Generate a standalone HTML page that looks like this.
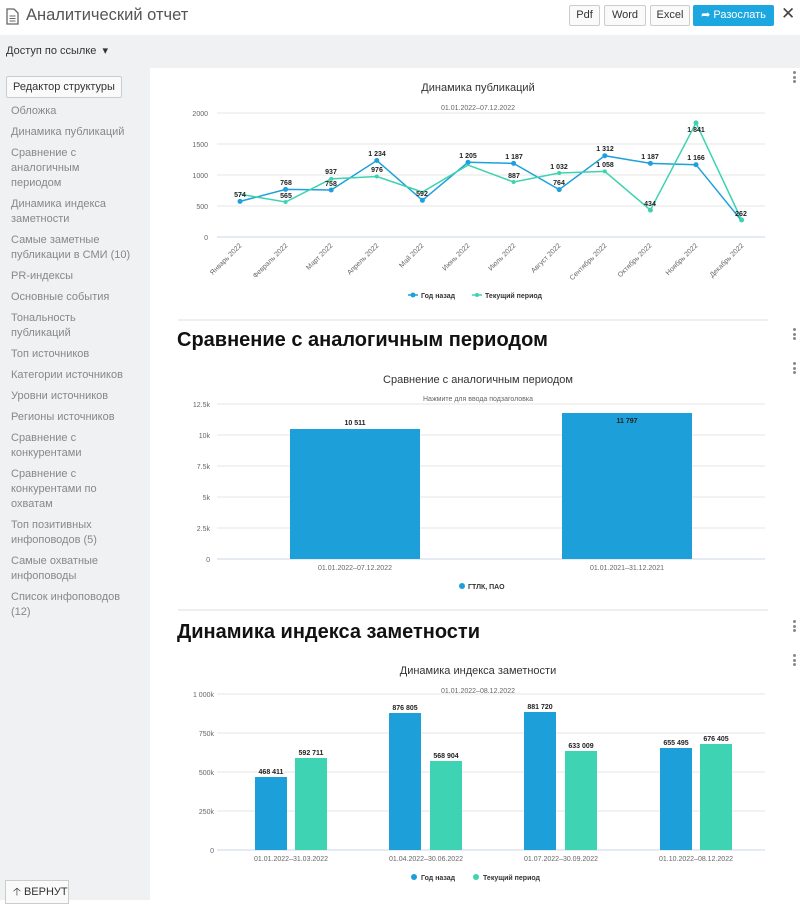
<!DOCTYPE html>
<html><head><meta charset="utf-8"><style>
*{margin:0;padding:0;box-sizing:border-box}
body{width:800px;height:900px;overflow:hidden;font-family:"Liberation Sans","DejaVu Sans",sans-serif;background:#fff;position:relative}
.top{position:absolute;left:0;top:0;width:800px;height:35px;background:#fff}
.title{position:absolute;left:26px;top:6px;font-size:16.5px;color:#555}
.btn{position:absolute;top:5px;height:21px;border:1px solid #ccc;border-radius:2px;background:#fafafa;font-size:11px;color:#333;text-align:center;line-height:19px}
.bar2{position:absolute;left:0;top:35px;width:800px;height:33px;background:#f0f1f3}
.side{position:absolute;left:0;top:68px;width:150px;height:832px;background:#f0f1f3}
.side .ed{position:absolute;left:6px;top:8px;width:116px;height:22px;border:1px solid #ccc;background:#fafafa;border-radius:2px;font-size:11px;color:#333;text-align:center;line-height:20px}
.nav{position:absolute;left:11px;top:36px;width:121px;font-size:11px;color:#888;line-height:15px}
.nav div{margin-bottom:6px}
.h{position:absolute;left:177px;font-size:20px;font-weight:bold;color:#111}
.dots{position:absolute;left:793px;width:3px;font-size:0}
.dots i{display:block;width:3px;height:3px;background:#888;border-radius:50%;margin-bottom:1.5px}
svg{position:absolute;left:0;top:0}
</style></head><body>
<div class="top">
<svg width="20" height="20" style="left:5px;top:8px"><path d="M2 1h7l4 4v11H2z" fill="none" stroke="#666" stroke-width="1.3"/><path d="M4.5 8h6M4.5 10.5h6M4.5 13h6" stroke="#666"/></svg>
<div class="title">Аналитический отчет</div>
<div class="btn" style="left:569px;width:31px">Pdf</div>
<div class="btn" style="left:604px;width:42px">Word</div>
<div class="btn" style="left:650px;width:40px">Excel</div>
<div class="btn" style="left:693px;width:81px;background:#1da7e0;border-color:#1da7e0;color:#fff">➦ Разослать</div>
<div style="position:absolute;left:781px;top:4px;font-size:17px;color:#444">✕</div>
</div>
<div class="bar2"><div style="position:absolute;left:6px;top:9px;font-size:11px;color:#333">Доступ по ссылке &nbsp;▾</div></div>
<div class="side">
<div class="ed">Редактор структуры</div>
<div class="nav">
<div>Обложка</div><div>Динамика публикаций</div><div>Сравнение с аналогичным периодом</div><div>Динамика индекса заметности</div><div>Самые заметные публикации в СМИ (10)</div><div>PR-индексы</div><div>Основные события</div><div>Тональность публикаций</div><div>Топ источников</div><div>Категории источников</div><div>Уровни источников</div><div>Регионы источников</div><div>Сравнение с конкурентами</div><div>Сравнение с конкурентами по охватам</div><div>Топ позитивных инфоповодов (5)</div><div>Самые охватные инфоповоды</div><div>Список инфоповодов (12)</div>
</div>
<div style="position:absolute;left:5px;top:812px;width:64px;height:24px;border:1px solid #ccc;background:#fafafa;font-size:11px;color:#333;line-height:22px;padding-left:7px">🡡 ВЕРНУТ</div>
</div>
<div class="dots" style="top:71px"><i></i><i></i><i></i></div>
<div class="dots" style="top:328px"><i></i><i></i><i></i></div>
<div class="dots" style="top:362px"><i></i><i></i><i></i></div>
<div class="dots" style="top:620px"><i></i><i></i><i></i></div>
<div class="dots" style="top:654px"><i></i><i></i><i></i></div>
<div class="h" style="top:329px">Сравнение с аналогичным периодом</div>
<div class="h" style="top:621px">Динамика индекса заметности</div>
<svg width="800" height="900" font-family="Liberation Sans, sans-serif">
<line x1="178" y1="320" x2="768" y2="320" stroke="#ddd"/>
<line x1="178" y1="610" x2="768" y2="610" stroke="#ddd"/>
<text x="478" y="91" font-size="11" fill="#333" text-anchor="middle">Динамика публикаций</text>
<text x="478" y="110" font-size="7" fill="#666" text-anchor="middle">01.01.2022–07.12.2022</text>
<g stroke="#e6e6e6"><line x1="217" y1="113" x2="765" y2="113"/><line x1="217" y1="144" x2="765" y2="144"/><line x1="217" y1="175" x2="765" y2="175"/><line x1="217" y1="206" x2="765" y2="206"/></g>
<line x1="217" y1="237" x2="765" y2="237" stroke="#cbd6ea"/>
<g font-size="7" fill="#666" text-anchor="end"><text x="208" y="116">2000</text><text x="208" y="147">1500</text><text x="208" y="178">1000</text><text x="208" y="209">500</text><text x="208" y="240">0</text></g>
<polyline fill="none" stroke="#1da0db" stroke-width="1.5" points="240,201.4 285.6,189.4 331.2,190 376.8,160.5 422.4,200.3 468,162.3 513.6,163.4 559.2,189.6 604.8,155.7 650.4,163.4 696,164.7 741.6,220.8"/>
<polyline fill="none" stroke="#3dd3b0" stroke-width="1.5" points="240,194.2 285.6,202 331.2,178.9 376.8,176.5 422.4,192 468,165.1 513.6,182 559.2,173 604.8,171.4 650.4,210.1 696,122.9 741.6,220"/>
<g fill="#1da0db"><circle cx="240" cy="201.4" r="2.5"/><circle cx="285.6" cy="189.4" r="2.5"/><circle cx="331.2" cy="190" r="2.5"/><circle cx="376.8" cy="160.5" r="2.5"/><circle cx="422.4" cy="200.3" r="2.5"/><circle cx="468" cy="162.3" r="2.5"/><circle cx="513.6" cy="163.4" r="2.5"/><circle cx="559.2" cy="189.6" r="2.5"/><circle cx="604.8" cy="155.7" r="2.5"/><circle cx="650.4" cy="163.4" r="2.5"/><circle cx="696" cy="164.7" r="2.5"/></g>
<g fill="#3dd3b0"><circle cx="285.6" cy="202" r="2"/><circle cx="331.2" cy="178.9" r="2"/><circle cx="376.8" cy="176.5" r="2"/><circle cx="513.6" cy="182" r="2"/><circle cx="559.2" cy="173" r="2"/><circle cx="604.8" cy="171.4" r="2"/><circle cx="650.4" cy="210.1" r="2.5"/><circle cx="696" cy="122.9" r="2.5"/><circle cx="741.6" cy="220" r="2.5"/></g>
<g font-size="7" font-weight="bold" fill="#222" text-anchor="middle">
<text x="240" y="197">574</text><text x="286" y="185">768</text><text x="286" y="198">565</text><text x="331" y="174">937</text><text x="331" y="186">758</text><text x="377" y="156">1 234</text><text x="377" y="172">976</text><text x="422" y="196">592</text><text x="468" y="158">1 205</text><text x="514" y="159">1 187</text><text x="514" y="178">887</text><text x="559" y="169">1 032</text><text x="559" y="185">764</text><text x="605" y="151">1 312</text><text x="605" y="167">1 058</text><text x="650" y="159">1 187</text><text x="650" y="206">434</text><text x="696" y="132">1 841</text><text x="696" y="160">1 166</text><text x="741" y="216">262</text></g>
<g font-size="7" fill="#666" text-anchor="end">
<text transform="translate(242,246) rotate(-45)">Январь 2022</text><text transform="translate(288,246) rotate(-45)">Февраль 2022</text><text transform="translate(333,246) rotate(-45)">Март 2022</text><text transform="translate(379,246) rotate(-45)">Апрель 2022</text><text transform="translate(424,246) rotate(-45)">Май 2022</text><text transform="translate(470,246) rotate(-45)">Июнь 2022</text><text transform="translate(516,246) rotate(-45)">Июль 2022</text><text transform="translate(561,246) rotate(-45)">Август 2022</text><text transform="translate(607,246) rotate(-45)">Сентябрь 2022</text><text transform="translate(652,246) rotate(-45)">Октябрь 2022</text><text transform="translate(698,246) rotate(-45)">Ноябрь 2022</text><text transform="translate(744,246) rotate(-45)">Декабрь 2022</text></g>
<line x1="408" y1="295" x2="418" y2="295" stroke="#1da0db" stroke-width="1.5"/><circle cx="413" cy="295" r="2.5" fill="#1da0db"/>
<text x="421" y="298" font-size="7" font-weight="bold" fill="#333">Год назад</text>
<line x1="472" y1="295" x2="482" y2="295" stroke="#3dd3b0" stroke-width="1.5"/><circle cx="477" cy="295" r="2" fill="#3dd3b0"/>
<text x="485" y="298" font-size="7" font-weight="bold" fill="#333">Текущий период</text>
<text x="478" y="383" font-size="11" fill="#333" text-anchor="middle">Сравнение с аналогичным периодом</text>
<text x="478" y="401" font-size="7" fill="#666" text-anchor="middle">Нажмите для ввода подзаголовка</text>
<g stroke="#e6e6e6"><line x1="217" y1="404" x2="765" y2="404"/><line x1="217" y1="435" x2="765" y2="435"/><line x1="217" y1="466" x2="765" y2="466"/><line x1="217" y1="497" x2="765" y2="497"/><line x1="217" y1="528" x2="765" y2="528"/></g>
<line x1="217" y1="559" x2="765" y2="559" stroke="#cbd6ea"/>
<g font-size="7" fill="#666" text-anchor="end"><text x="210" y="407">12.5k</text><text x="210" y="438">10k</text><text x="210" y="469">7.5k</text><text x="210" y="500">5k</text><text x="210" y="531">2.5k</text><text x="210" y="562">0</text></g>
<rect x="290" y="429" width="130" height="130" fill="#1d9fd9"/>
<rect x="562" y="413" width="130" height="146" fill="#1d9fd9"/>
<g font-size="7" font-weight="bold" fill="#222" text-anchor="middle"><text x="355" y="425">10 511</text><text x="627" y="423">11 797</text></g>
<g font-size="7" fill="#666" text-anchor="middle"><text x="355" y="570">01.01.2022–07.12.2022</text><text x="627" y="570">01.01.2021–31.12.2021</text></g>
<circle cx="462" cy="586" r="3" fill="#1d9fd9"/><text x="468" y="589" font-size="7" font-weight="bold" fill="#333">ГТЛК, ПАО</text>
<text x="478" y="674" font-size="11" fill="#333" text-anchor="middle">Динамика индекса заметности</text>
<text x="478" y="693" font-size="7" fill="#666" text-anchor="middle">01.01.2022–08.12.2022</text>
<g stroke="#e6e6e6"><line x1="217" y1="694" x2="765" y2="694"/><line x1="217" y1="733" x2="765" y2="733"/><line x1="217" y1="772" x2="765" y2="772"/><line x1="217" y1="811" x2="765" y2="811"/></g>
<line x1="217" y1="850" x2="765" y2="850" stroke="#cbd6ea"/>
<g font-size="7" fill="#666" text-anchor="end"><text x="214" y="697">1 000k</text><text x="214" y="736">750k</text><text x="214" y="775">500k</text><text x="214" y="814">250k</text><text x="214" y="853">0</text></g>
<g fill="#1d9fd9"><rect x="255" y="777" width="32" height="73"/><rect x="389" y="713" width="32" height="137"/><rect x="524" y="712" width="32" height="138"/><rect x="660" y="748" width="32" height="102"/></g>
<g fill="#3dd3b3"><rect x="295" y="758" width="32" height="92"/><rect x="430" y="761" width="32" height="89"/><rect x="565" y="751" width="32" height="99"/><rect x="700" y="744" width="32" height="106"/></g>
<g font-size="7" font-weight="bold" fill="#222" text-anchor="middle"><text x="271" y="774">468 411</text><text x="311" y="755">592 711</text><text x="405" y="710">876 805</text><text x="446" y="758">568 904</text><text x="540" y="709">881 720</text><text x="581" y="748">633 009</text><text x="676" y="745">655 495</text><text x="716" y="741">676 405</text></g>
<g font-size="7" fill="#666" text-anchor="middle"><text x="291" y="861">01.01.2022–31.03.2022</text><text x="426" y="861">01.04.2022–30.06.2022</text><text x="561" y="861">01.07.2022–30.09.2022</text><text x="696" y="861">01.10.2022–08.12.2022</text></g>
<circle cx="414" cy="877" r="3" fill="#1d9fd9"/><text x="421" y="880" font-size="7" font-weight="bold" fill="#333">Год назад</text>
<circle cx="476" cy="877" r="3" fill="#3dd3b3"/><text x="483" y="880" font-size="7" font-weight="bold" fill="#333">Текущий период</text>
</svg>
</body></html>
